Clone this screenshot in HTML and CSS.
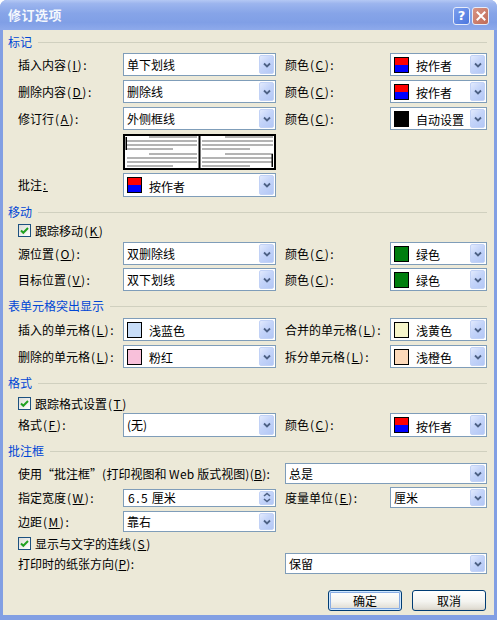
FILE: index.html
```html
<!DOCTYPE html>
<html lang="zh-CN">
<head>
<meta charset="utf-8">
<title>修订选项</title>
<link rel="stylesheet" href="styles.css">
</head>
<body>
<div class="win">
  <div class="titlebar">
    <span class="title">修订选项</span>
    <div class="tbtns">
      <span class="tb help">?</span>
      <span class="tb close"><svg width="10" height="10" viewBox="0 0 10 10"><path d="M1.5 1.5 L8.5 8.5 M8.5 1.5 L1.5 8.5" stroke="#fff" stroke-width="2" stroke-linecap="square"/></svg></span>
    </div>
  </div>
  <div class="body">
    <div class="sec"><span>标记</span></div>

    <div class="row h23 mt4">
      <span class="lab">插入内容<span class="k">(<u>I</u>):</span></span>
      <div class="combo"><span class="val">单下划线</span><span class="arr"><svg width="8" height="6" viewBox="0 0 8 6"><path d="M1 1.5 L4 4.5 L7 1.5" fill="none" stroke="#4D6185" stroke-width="1.8"/></svg></span></div>
      <span class="lab c4">颜色<span class="k">(<u>C</u>):</span></span>
      <div class="combo c5"><span class="sw byauthor"></span><span class="val cv">按作者</span><span class="arr"><svg width="8" height="6" viewBox="0 0 8 6"><path d="M1 1.5 L4 4.5 L7 1.5" fill="none" stroke="#4D6185" stroke-width="1.8"/></svg></span></div>
    </div>

    <div class="row h23 mt4">
      <span class="lab">删除内容<span class="k">(<u>D</u>):</span></span>
      <div class="combo"><span class="val">删除线</span><span class="arr"><svg width="8" height="6" viewBox="0 0 8 6"><path d="M1 1.5 L4 4.5 L7 1.5" fill="none" stroke="#4D6185" stroke-width="1.8"/></svg></span></div>
      <span class="lab c4">颜色<span class="k">(<u>C</u>):</span></span>
      <div class="combo c5"><span class="sw byauthor"></span><span class="val cv">按作者</span><span class="arr"><svg width="8" height="6" viewBox="0 0 8 6"><path d="M1 1.5 L4 4.5 L7 1.5" fill="none" stroke="#4D6185" stroke-width="1.8"/></svg></span></div>
    </div>

    <div class="row h23 mt4">
      <span class="lab">修订行<span class="k">(<u>A</u>):</span></span>
      <div class="combo"><span class="val">外侧框线</span><span class="arr"><svg width="8" height="6" viewBox="0 0 8 6"><path d="M1 1.5 L4 4.5 L7 1.5" fill="none" stroke="#4D6185" stroke-width="1.8"/></svg></span></div>
      <span class="lab c4">颜色<span class="k">(<u>C</u>):</span></span>
      <div class="combo c5"><span class="sw black"></span><span class="val cv">自动设置</span><span class="arr"><svg width="8" height="6" viewBox="0 0 8 6"><path d="M1 1.5 L4 4.5 L7 1.5" fill="none" stroke="#4D6185" stroke-width="1.8"/></svg></span></div>
    </div>

    <div class="row h36 mt4">
      <span class="lab"></span>
      <svg class="preview" width="153" height="36" viewBox="0 0 153 36">
        <rect x="0" y="0" width="153" height="36" fill="#fff"/>
        <g fill="#B4B4B4">
          <rect x="26" y="2" width="48" height="2"/>
          <rect x="4" y="6" width="70" height="2"/>
          <rect x="4" y="10" width="70" height="2"/>
          <rect x="4" y="14" width="46" height="2"/>
          <rect x="26" y="19" width="48" height="2"/>
          <rect x="4" y="23" width="70" height="2"/>
          <rect x="4" y="27" width="70" height="2"/>
          <rect x="4" y="31" width="46" height="2"/>
          <rect x="102" y="2" width="48" height="2"/>
          <rect x="79" y="6" width="71" height="2"/>
          <rect x="79" y="10" width="71" height="2"/>
          <rect x="79" y="14" width="48" height="2"/>
          <rect x="102" y="19" width="48" height="2"/>
          <rect x="79" y="23" width="71" height="2"/>
          <rect x="79" y="27" width="71" height="2"/>
          <rect x="79" y="31" width="48" height="2"/>
        </g>
        <rect x="2.5" y="3" width="1.5" height="13" fill="#000"/>
        <rect x="148.5" y="20" width="1.5" height="13" fill="#000"/>
        <rect x="1" y="1" width="151" height="34" fill="none" stroke="#000" stroke-width="2"/>
        <rect x="75.5" y="1" width="2" height="34" fill="#000"/>
      </svg>
    </div>

    <div class="row h24 mt3">
      <span class="lab">批注<span class="k"><u>:</u></span></span>
      <div class="combo"><span class="sw byauthor"></span><span class="val cv">按作者</span><span class="arr"><svg width="8" height="6" viewBox="0 0 8 6"><path d="M1 1.5 L4 4.5 L7 1.5" fill="none" stroke="#4D6185" stroke-width="1.8"/></svg></span></div>
    </div>

    <div class="sec mt8"><span>移动</span></div>

    <div class="chkrow mt5">
      <span class="chk"><svg width="11" height="11" viewBox="0 0 11 11"><path d="M2 5.5 L4.3 7.8 L9 3" fill="none" stroke="#21A121" stroke-width="2"/></svg></span>
      <span>跟踪移动<span class="k">(<u>K</u>)</span></span>
    </div>

    <div class="row h23 mt5">
      <span class="lab">源位置<span class="k">(<u>O</u>):</span></span>
      <div class="combo"><span class="val">双删除线</span><span class="arr"><svg width="8" height="6" viewBox="0 0 8 6"><path d="M1 1.5 L4 4.5 L7 1.5" fill="none" stroke="#4D6185" stroke-width="1.8"/></svg></span></div>
      <span class="lab c4">颜色<span class="k">(<u>C</u>):</span></span>
      <div class="combo c5"><span class="sw green"></span><span class="val cv">绿色</span><span class="arr"><svg width="8" height="6" viewBox="0 0 8 6"><path d="M1 1.5 L4 4.5 L7 1.5" fill="none" stroke="#4D6185" stroke-width="1.8"/></svg></span></div>
    </div>

    <div class="row h23 mt3">
      <span class="lab">目标位置<span class="k">(<u>V</u>):</span></span>
      <div class="combo"><span class="val">双下划线</span><span class="arr"><svg width="8" height="6" viewBox="0 0 8 6"><path d="M1 1.5 L4 4.5 L7 1.5" fill="none" stroke="#4D6185" stroke-width="1.8"/></svg></span></div>
      <span class="lab c4">颜色<span class="k">(<u>C</u>):</span></span>
      <div class="combo c5"><span class="sw green"></span><span class="val cv">绿色</span><span class="arr"><svg width="8" height="6" viewBox="0 0 8 6"><path d="M1 1.5 L4 4.5 L7 1.5" fill="none" stroke="#4D6185" stroke-width="1.8"/></svg></span></div>
    </div>

    <div class="sec mt8"><span>表单元格突出显示</span></div>

    <div class="row h23 mt5">
      <span class="lab">插入的单元格<span class="k">(<u>L</u>):</span></span>
      <div class="combo"><span class="sw lblue"></span><span class="val cv">浅蓝色</span><span class="arr"><svg width="8" height="6" viewBox="0 0 8 6"><path d="M1 1.5 L4 4.5 L7 1.5" fill="none" stroke="#4D6185" stroke-width="1.8"/></svg></span></div>
      <span class="lab c4">合并的单元格<span class="k">(<u>L</u>):</span></span>
      <div class="combo c5"><span class="sw lyellow"></span><span class="val cv">浅黄色</span><span class="arr"><svg width="8" height="6" viewBox="0 0 8 6"><path d="M1 1.5 L4 4.5 L7 1.5" fill="none" stroke="#4D6185" stroke-width="1.8"/></svg></span></div>
    </div>

    <div class="row h23 mt4">
      <span class="lab">删除的单元格<span class="k">(<u>L</u>):</span></span>
      <div class="combo"><span class="sw pink"></span><span class="val cv">粉红</span><span class="arr"><svg width="8" height="6" viewBox="0 0 8 6"><path d="M1 1.5 L4 4.5 L7 1.5" fill="none" stroke="#4D6185" stroke-width="1.8"/></svg></span></div>
      <span class="lab c4">拆分单元格<span class="k">(<u>L</u>):</span></span>
      <div class="combo c5"><span class="sw lorange"></span><span class="val cv">浅橙色</span><span class="arr"><svg width="8" height="6" viewBox="0 0 8 6"><path d="M1 1.5 L4 4.5 L7 1.5" fill="none" stroke="#4D6185" stroke-width="1.8"/></svg></span></div>
    </div>

    <div class="sec mt8"><span>格式</span></div>

    <div class="chkrow mt7">
      <span class="chk"><svg width="11" height="11" viewBox="0 0 11 11"><path d="M2 5.5 L4.3 7.8 L9 3" fill="none" stroke="#21A121" stroke-width="2"/></svg></span>
      <span>跟踪格式设置<span class="k">(<u>T</u>)</span></span>
    </div>

    <div class="row h24 mt3">
      <span class="lab">格式<span class="k">(<u>F</u>):</span></span>
      <div class="combo"><span class="val">(无)</span><span class="arr"><svg width="8" height="6" viewBox="0 0 8 6"><path d="M1 1.5 L4 4.5 L7 1.5" fill="none" stroke="#4D6185" stroke-width="1.8"/></svg></span></div>
      <span class="lab c4">颜色<span class="k">(<u>C</u>):</span></span>
      <div class="combo c5"><span class="sw byauthor"></span><span class="val cv">按作者</span><span class="arr"><svg width="8" height="6" viewBox="0 0 8 6"><path d="M1 1.5 L4 4.5 L7 1.5" fill="none" stroke="#4D6185" stroke-width="1.8"/></svg></span></div>
    </div>

    <div class="sec mt7"><span>批注框</span></div>

    <div class="row h21 mt5">
      <span class="lab wide">使用“批注框”<span class="k">(</span>打印视图和 <span class="k">Web</span> 版式视图<span class="k">)(<u>B</u>):</span></span>
      <div class="combo wide2"><span class="val">总是</span><span class="arr"><svg width="8" height="6" viewBox="0 0 8 6"><path d="M1 1.5 L4 4.5 L7 1.5" fill="none" stroke="#4D6185" stroke-width="1.8"/></svg></span></div>
    </div>

    <div class="row h21 mt3">
      <span class="lab">指定宽度<span class="k">(<u>W</u>):</span></span>
      <div class="combo spin"><span class="val"><span class="k">6.5</span> 厘米</span><span class="arr sarr"><svg width="8" height="11" viewBox="0 0 8 11"><path d="M1 4 L4 1.5 L7 4 M1 7 L4 9.5 L7 7" fill="none" stroke="#4D6185" stroke-width="1.6"/></svg></span></div>
      <span class="lab c4">度量单位<span class="k">(<u>E</u>):</span></span>
      <div class="combo c5"><span class="val">厘米</span><span class="arr"><svg width="8" height="6" viewBox="0 0 8 6"><path d="M1 1.5 L4 4.5 L7 1.5" fill="none" stroke="#4D6185" stroke-width="1.8"/></svg></span></div>
    </div>

    <div class="row h21 mt3">
      <span class="lab">边距<span class="k">(<u>M</u>):</span></span>
      <div class="combo"><span class="val">靠右</span><span class="arr"><svg width="8" height="6" viewBox="0 0 8 6"><path d="M1 1.5 L4 4.5 L7 1.5" fill="none" stroke="#4D6185" stroke-width="1.8"/></svg></span></div>
    </div>

    <div class="chkrow mt5">
      <span class="chk"><svg width="11" height="11" viewBox="0 0 11 11"><path d="M2 5.5 L4.3 7.8 L9 3" fill="none" stroke="#21A121" stroke-width="2"/></svg></span>
      <span>显示与文字的连线<span class="k">(<u>S</u>)</span></span>
    </div>

    <div class="row h21 mt3">
      <span class="lab wide">打印时的纸张方向<span class="k">(<u>P</u>):</span></span>
      <div class="combo wide2"><span class="val">保留</span><span class="arr"><svg width="8" height="6" viewBox="0 0 8 6"><path d="M1 1.5 L4 4.5 L7 1.5" fill="none" stroke="#4D6185" stroke-width="1.8"/></svg></span></div>
    </div>

    <div class="btnrow">
      <span class="btn def">确定</span>
      <span class="btn">取消</span>
    </div>
  </div>
</div>
</body>
</html>
```

FILE: styles.css
```css
* { box-sizing: border-box; margin: 0; padding: 0; }
html, body { width: 497px; height: 620px; overflow: hidden; background: #ffffff; }
body {
  font-family: "Noto Sans CJK SC", "Noto Sans", sans-serif;
  font-size: 12px;
  color: #000;
}
u { text-decoration: underline; text-underline-offset: 1px; }
.k { letter-spacing: 1.5px; padding-left: 1px; }
.lab.wide .k { letter-spacing: 0.3px; padding-left: 0; }

.win {
  width: 497px;
  height: 620px;
  display: flex;
  flex-direction: column;
  background: #829FE3;
  border-radius: 7px 7px 0 0;
}

.titlebar {
  height: 30px;
  flex: none;
  display: flex;
  align-items: center;
  padding: 0 8px 0 8px;
  border-radius: 7px 7px 0 0;
  background: linear-gradient(180deg, #B4C8F4 0%, #9CB5EE 12%, #86A4E8 45%, #809FE6 75%, #8EAAEB 100%);
}
.title {
  flex: 1;
  color: #F4F7FD;
  font-weight: bold;
  font-size: 13px;
  line-height: 16px;
  letter-spacing: 0.5px;
}
.tbtns { display: flex; gap: 2px; margin-top: 1px; }
.tb {
  width: 17px;
  height: 18px;
  border: 1px solid #E6ECFA;
  border-radius: 3px;
  display: flex;
  align-items: center;
  justify-content: center;
  color: #fff;
  font-family: "DejaVu Sans", sans-serif;
  font-weight: bold;
  font-size: 13px;
  line-height: 1;
}
.help { background: linear-gradient(135deg, #7C9FEE, #4A76DE); }
.close { background: linear-gradient(135deg, #D99484, #BF6B58); }

.body {
  flex: 1;
  margin: 0 3px 5px 3px;
  background: #ECE9D8;
  padding: 5px 0 0 5px;
  display: flex;
  flex-direction: column;
}

.sec {
  height: 14px;
  flex: none;
  display: flex;
  align-items: center;
  gap: 6px;
  color: #0046D5;
  font-size: 12px;
  line-height: 14px;
  margin-right: 7px;
}
.sec::after {
  content: "";
  flex: 1;
  height: 1px;
  background: #D0D0BF;
}

.row {
  flex: none;
  margin-left: 10px;
  display: grid;
  grid-template-columns: 105px 153px 9px 105px 97px;
  align-items: center;
}
.h21 { height: 21px; }
.h23 { height: 23px; }
.h24 { height: 24px; }
.h36 { height: 36px; }
.mt3 { margin-top: 3px; }
.mt4 { margin-top: 4px; }
.mt5 { margin-top: 5px; }
.mt7 { margin-top: 7px; }
.mt8 { margin-top: 8px; }

.lab { white-space: nowrap; line-height: 16px; grid-column: 1; }
.lab.c4 { grid-column: 4; }
.lab.wide { grid-column: 1 / 4; }

.combo {
  grid-column: 2;
  height: 100%;
  background: #fff;
  border: 1px solid #7F9DB9;
  display: flex;
  align-items: center;
  padding: 1px 1px 1px 3px;
}
.combo.c5 { grid-column: 5; }
.combo.wide2 { grid-column: 4 / 6; }
.combo.spin { height: 18px; }

.val {
  flex: 1;
  font-size: 12px;
  line-height: 16px;
  white-space: nowrap;
}
.val.cv { padding-left: 7px; padding-top: 3px; }

.arr {
  width: 15px;
  flex: none;
  align-self: stretch;
  border-radius: 2px;
  background: linear-gradient(135deg, #E2EAFD 0%, #C4D4F9 45%, #B3C7F5 100%);
  border: 1px solid #C2D2F6;
  display: flex;
  align-items: center;
  justify-content: center;
}

.sw {
  width: 15px;
  height: 16px;
  flex: none;
  border: 1px solid #000;
}
.byauthor { background: linear-gradient(180deg, #FF0000 0 50%, #0000FF 50% 100%); }
.black { background: #000; }
.green { background: #007E0E; }
.lblue { background: #C8DDF8; }
.pink { background: #F8C0DA; }
.lyellow { background: #F7F6CA; }
.lorange { background: #FCD9BA; }

.preview { grid-column: 2; display: block; }

.chkrow {
  flex: none;
  height: 13px;
  margin-left: 10px;
  display: flex;
  align-items: center;
  gap: 4px;
  line-height: 16px;
}
.chk {
  width: 13px;
  height: 13px;
  flex: none;
  border: 1px solid #1C5180;
  background: linear-gradient(135deg, #DCDCD7, #FFFFFF);
  display: flex;
  align-items: center;
  justify-content: center;
}

.btnrow {
  flex: none;
  margin-top: 16px;
  height: 21px;
  display: flex;
  justify-content: flex-end;
  gap: 10px;
  padding-right: 8px;
}
.btn {
  width: 74px;
  height: 21px;
  border: 1px solid #003C74;
  border-radius: 3px;
  background: linear-gradient(180deg, #FFFFFF 0%, #F4F4F0 55%, #E2DFD6 90%, #D6D0C5 100%);
  display: flex;
  align-items: center;
  justify-content: center;
  font-size: 12px;
  line-height: 16px;
}
.btn.def { box-shadow: inset 0 0 0 1px #CEE7FF, inset 0 0 0 2px #89ADE4; }
```
